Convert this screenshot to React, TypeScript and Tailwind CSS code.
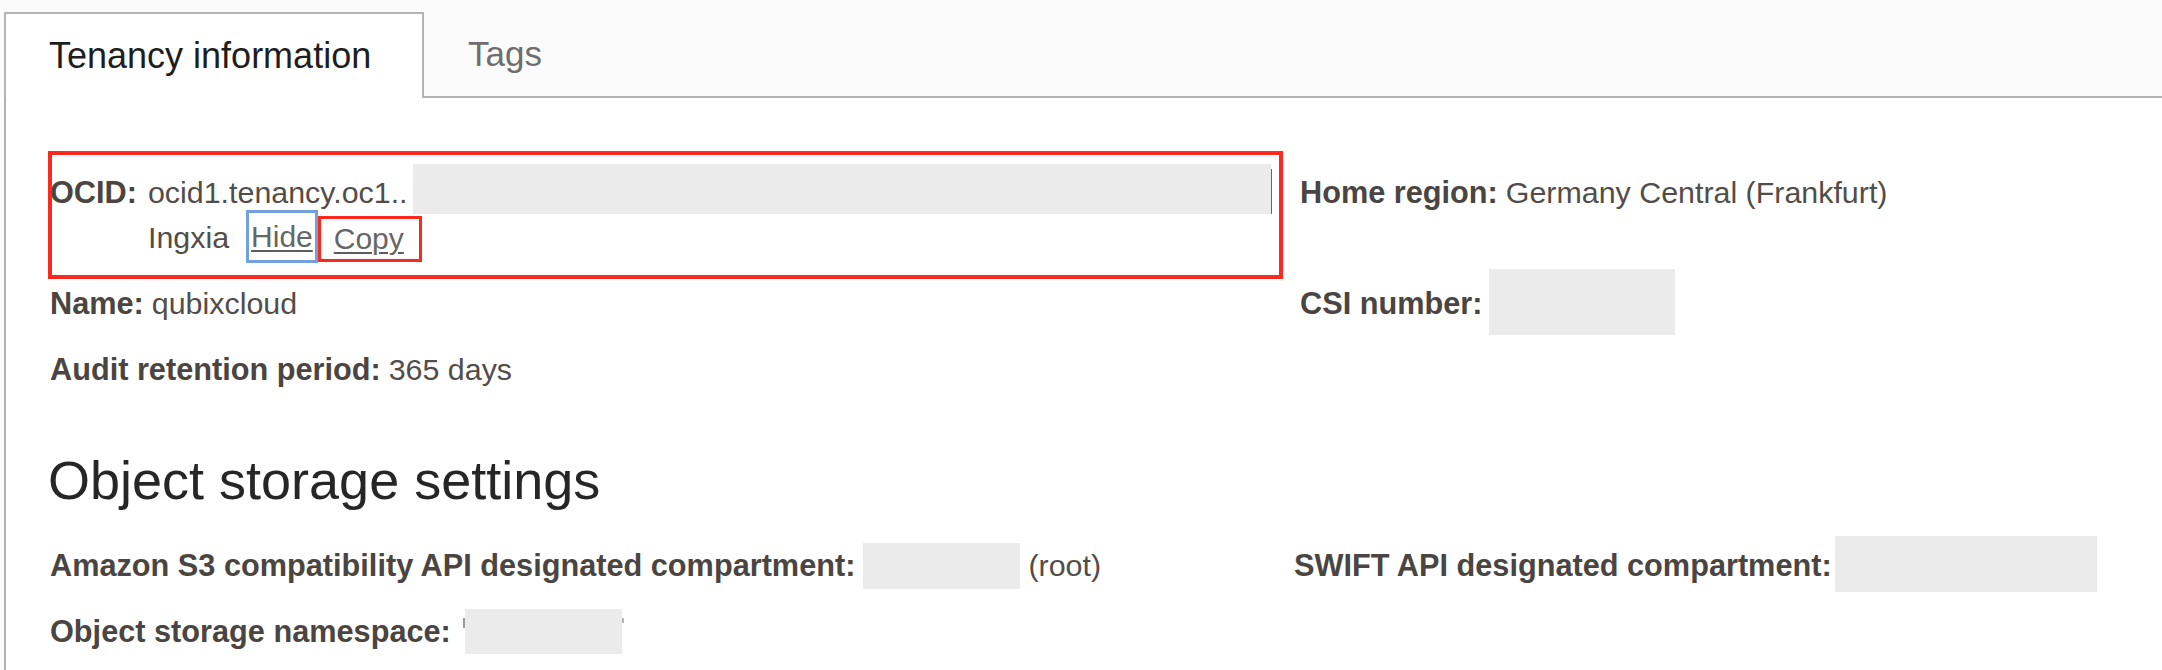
import React from "react";

const LABEL = "font-bold text-[30.7px] text-[#4a4541]";
const VALUE = "text-[30.4px] text-[#524d49]";

export default function App() {
  return (
    <div className="w-[2162px] min-h-[670px] bg-white font-['Liberation_Sans',Arial,sans-serif] overflow-hidden">
      {/* Tab strip */}
      <div className="flex bg-[#fbfbfb] pt-[12px] pl-[4px]">
        <div className="w-[420px] h-[86px] bg-white border-l-2 border-t-2 border-r-2 border-[#b3b3b3] flex items-center pl-[43px]">
          <span className="text-[36px] text-[#1e1e1e]">Tenancy information</span>
        </div>
        <div className="flex-1 h-[86px] border-b-2 border-[#b3b3b3] flex items-center pl-[44px]">
          <span className="text-[35px] text-[#6e6e6e]">Tags</span>
        </div>
      </div>

      {/* Panel */}
      <div className="ml-[4px] border-l-2 border-[#b3b3b3] pl-[44px] pt-[72px] pb-[16px] leading-[45px]">
        {/* Tenancy info grid */}
        <div className="grid grid-cols-[1250px_1fr] gap-y-[21px]">
          {/* OCID */}
          <div className="relative flex gap-[11px]">
            <div className="absolute left-[-2px] top-[-19px] w-[1235px] h-[128px] border-[4px] border-[#fb2a1e] pointer-events-none" />
            <span className={LABEL}>OCID:</span>
            <div className="flex flex-col">
              <div className="flex items-center h-[45px]">
                <span className={VALUE}>ocid1.tenancy.oc1..</span>
                <div className="relative ml-[5px] w-[858px] h-[50px] -mt-[6px] mb-[1px] bg-[#ebebeb]">
                  <div className="absolute right-[-1px] top-[5px] bottom-0 w-px bg-[#fb2a1e]" />
                </div>
              </div>
              <div className="flex items-center h-[45px]">
                <span className={VALUE}>Ingxia</span>
                <span className="ml-[17px] h-[53px] -mt-[5px] -mb-[3px] border-[3px] border-[#72a2dc] px-[2px] flex items-center">
                  <span className="text-[30px] text-[#666666] underline decoration-[2px] underline-offset-[3px] decoration-[#5c5c5c] leading-[45px]">
                    Hide
                  </span>
                </span>
                <span className="h-[46px] mt-[1px] -mb-[2px] border-[3px] border-[#fb2a1e] pl-[13px] pr-[15px] flex items-center">
                  <span className="text-[30px] text-[#666666] underline decoration-[2px] underline-offset-[3px] decoration-[#5c5c5c] leading-[40px]">
                    Copy
                  </span>
                </span>
              </div>
            </div>
          </div>
          <div className="flex items-start h-[45px]">
            <span className={LABEL}>Home region:</span>
            <span className={`${VALUE} ml-[8px]`}>Germany Central (Frankfurt)</span>
          </div>

          {/* Name / CSI */}
          <div className="flex items-center h-[45px]">
            <span className={LABEL}>Name:</span>
            <span className={`${VALUE} ml-[8px]`}>qubixcloud</span>
          </div>
          <div className="flex items-center h-[45px]">
            <span className={LABEL}>CSI number:</span>
            <div className="ml-[7px] w-[186px] h-[66px] -mt-[12px] -mb-[9px] bg-[#ebebeb]" />
          </div>

          {/* Audit */}
          <div className="flex items-center h-[45px]">
            <span className={LABEL}>Audit retention period:</span>
            <span className={`${VALUE} ml-[8px]`}>365 days</span>
          </div>
          <div />
        </div>

        {/* Object storage settings */}
        <h2 className="mt-[56px] -ml-[2px] text-[54px] leading-[64px] text-[#262626] font-normal">
          Object storage settings
        </h2>

        <div className="mt-[31px] grid grid-cols-[1244px_1fr] gap-y-[21px]">
          <div className="flex items-center h-[45px]">
            <span className={LABEL}>Amazon S3 compatibility API designated compartment:</span>
            <div className="ml-[8px] w-[157px] h-[46px] mb-[-1px] bg-[#ebebeb]" />
            <span className={`${VALUE} ml-[8px]`}>(root)</span>
          </div>
          <div className="flex items-center h-[45px]">
            <span className={LABEL}>SWIFT API designated compartment:</span>
            <div className="ml-[3px] w-[262px] h-[56px] -mt-[7px] -mb-[4px] bg-[#ebebeb]" />
          </div>

          <div className="flex items-center h-[45px]">
            <span className={LABEL}>Object storage namespace:</span>
            <div className="ml-[12px] self-start mt-[9px] w-[2px] h-[10px] bg-[#9a9a9a]" />
            <div className="w-[157px] h-[45px] bg-[#ebebeb]" />
            <div className="self-start mt-[9px] w-[2px] h-[5px] bg-[#b5b5b5]" />
          </div>
          <div />
        </div>
      </div>
    </div>
  );
}
